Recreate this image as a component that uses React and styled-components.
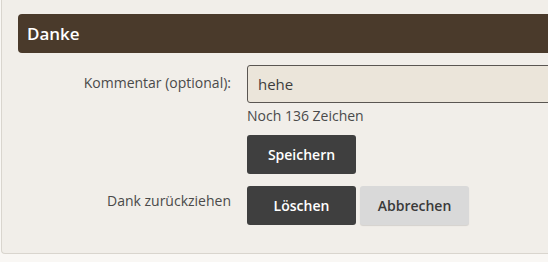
import React from "react";
import styled, { createGlobalStyle } from "styled-components";

const Global = createGlobalStyle`
  html, body { margin: 0; padding: 0; }
  body {
    background: #f9f7f4;
    font-family: "Open Sans", "Noto Sans", sans-serif;
    color: #474747;
    overflow: hidden;
  }
`;

const Panel = styled.div`
  margin-left: 1px;
  width: 600px;
  box-sizing: border-box;
  background: #f1eee9;
  border-left: 1px solid #d9d5ce;
  border-bottom: 1px solid #d9d5ce;
  border-bottom-left-radius: 4px;
  padding: 14px 0 28px 16px;
`;

const Header = styled.h2`
  margin: 0;
  height: 39px;
  box-sizing: border-box;
  display: flex;
  align-items: center;
  padding-left: 9px;
  background: #4a3a2b;
  border-radius: 4px;
  color: #ffffff;
  font-size: 17px;
  font-weight: 600;
`;

const Form = styled.div`
  display: grid;
  grid-template-columns: 213px 1fr;
  column-gap: 16px;
  margin-top: 12px;
`;

const Label = styled.div`
  text-align: right;
  font-size: 14px;
  line-height: 19px;
  color: #4a4a4a;
  padding-top: ${(p) => p.$top}px;
  margin-top: ${(p) => p.$mt || 0}px;
`;

const Field = styled.div`
  display: flex;
  flex-direction: column;
  align-items: flex-start;
  margin-top: ${(p) => p.$mt || 0}px;
`;

const Input = styled.div`
  width: 400px;
  height: 38px;
  box-sizing: border-box;
  background: #ebe5da;
  border: 1px solid #5a5652;
  border-radius: 3px;
  display: flex;
  align-items: center;
  padding-left: 10px;
  font-size: 15px;
  color: #3d3d3d;
`;

const Hint = styled.div`
  font-size: 14px;
  line-height: 18px;
  margin-top: 4px;
  color: #4a4a4a;
`;

const Buttons = styled.div`
  display: flex;
  gap: 4px;
  margin-top: ${(p) => p.$mt || 0}px;
`;

const Button = styled.button`
  width: 109px;
  height: 39px;
  border: none;
  border-radius: 3px;
  font-family: "Open Sans", "Noto Sans", sans-serif;
  font-size: 14px;
  font-weight: 600;
  cursor: pointer;
  background: ${(p) => (p.$light ? "#d9d9d9" : "#3f3f3f")};
  color: ${(p) => (p.$light ? "#3a3a3a" : "#ffffff")};
  box-shadow: ${(p) => (p.$light ? "0 1px 1px rgba(0,0,0,0.12)" : "none")};
`;

export default function App() {
  return (
    <>
      <Global />
      <Panel>
        <Header>Danke</Header>
        <Form>
          <Label $top={8}>Kommentar (optional):</Label>
          <Field>
            <Input>hehe</Input>
            <Hint>Noch 136 Zeichen</Hint>
            <Buttons $mt={10}>
              <Button>Speichern</Button>
            </Buttons>
          </Field>
          <Label $top={5} $mt={12}>Dank zurückziehen</Label>
          <Field $mt={12}>
            <Buttons>
              <Button>Löschen</Button>
              <Button $light>Abbrechen</Button>
            </Buttons>
          </Field>
        </Form>
      </Panel>
    </>
  );
}
